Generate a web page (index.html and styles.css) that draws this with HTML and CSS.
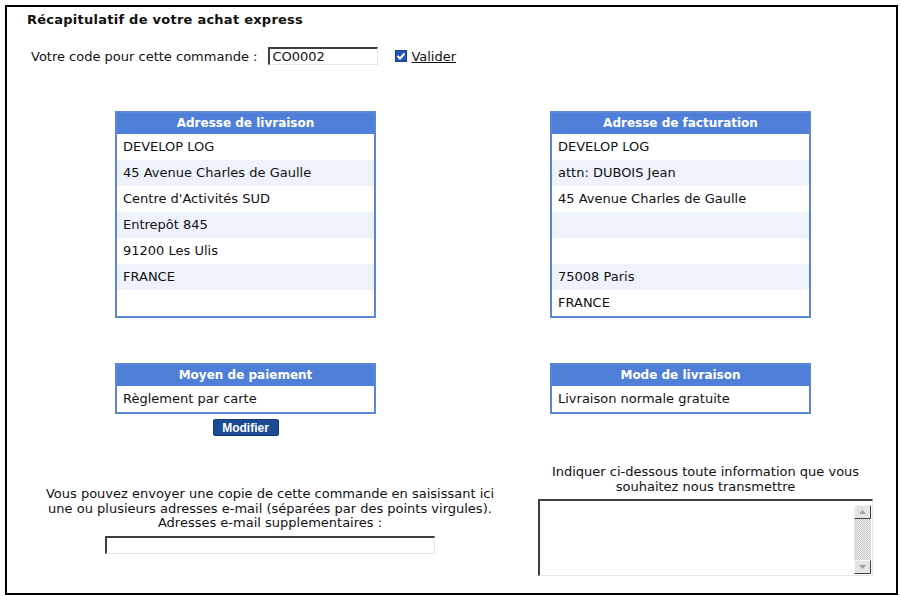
FILE: index.html
```html
<!DOCTYPE html>
<html lang="fr">
<head>
<meta charset="utf-8">
<title>Récapitulatif de votre achat express</title>
<link rel="stylesheet" href="styles.css">
</head>
<body>
<div class="page">
  <h1 class="title">Récapitulatif de votre achat express</h1>
  <div class="code-row">
    <label class="code-label" for="code">Votre code pour cette commande :</label>
    <input class="code-input" id="code" type="text" value="CO0002">
    <span class="check">
      <svg width="12" height="12" viewBox="0 0 12 12"><rect x="0.5" y="0.5" width="11" height="11" fill="#2456b8" stroke="#1c3f8a"/><path d="M2.5 6 L5 8.5 L9.5 3.5" fill="none" stroke="#fff" stroke-width="2"/></svg>
    </span>
    <a class="valider" href="#">Valider</a>
  </div>

  <div class="cards">
    <div class="card">
      <div class="card-head">Adresse de livraison</div>
      <div class="row">DEVELOP LOG</div>
      <div class="row alt">45 Avenue Charles de Gaulle</div>
      <div class="row">Centre d'Activités SUD</div>
      <div class="row alt">Entrepôt 845</div>
      <div class="row">91200 Les Ulis</div>
      <div class="row alt">FRANCE</div>
      <div class="row"></div>
    </div>
    <div class="card">
      <div class="card-head">Adresse de facturation</div>
      <div class="row">DEVELOP LOG</div>
      <div class="row alt">attn: DUBOIS Jean</div>
      <div class="row">45 Avenue Charles de Gaulle</div>
      <div class="row alt"></div>
      <div class="row"></div>
      <div class="row alt">75008 Paris</div>
      <div class="row">FRANCE</div>
    </div>
    <div class="card-wrap">
      <div class="card">
        <div class="card-head">Moyen de paiement</div>
        <div class="row">Règlement par carte</div>
      </div>
      <button class="btn" type="button">Modifier</button>
    </div>
    <div class="card-wrap">
      <div class="card">
        <div class="card-head">Mode de livraison</div>
        <div class="row">Livraison normale gratuite</div>
      </div>
    </div>
  </div>

  <div class="bottom">
    <div class="mail-block">
      <p class="note">Vous pouvez envoyer une copie de cette commande en saisissant ici<br>une ou plusieurs adresses e-mail (séparées par des points virgules).<br>Adresses e-mail supplementaires :</p>
      <input class="mail-input" type="text">
    </div>
    <div class="info-block">
      <p class="note">Indiquer ci-dessous toute information que vous<br>souhaitez nous transmettre</p>
      <div class="textbox">
        <textarea class="ta"></textarea>
        <div class="sbar">
          <div class="sbtn"><svg width="7" height="4" viewBox="0 0 7 4"><path d="M0 4 L3.5 0 L7 4 Z" fill="#a0a0a0"/></svg></div>
          <div class="strack"></div>
          <div class="sbtn"><svg width="7" height="4" viewBox="0 0 7 4"><path d="M0 0 L3.5 4 L7 0 Z" fill="#a0a0a0"/></svg></div>
        </div>
      </div>
    </div>
  </div>
</div>
</body>
</html>
```

FILE: styles.css
```css
* { box-sizing: border-box; }
html, body { margin: 0; padding: 0; background: #fff; }
body {
  font-family: "DejaVu Sans", Verdana, sans-serif;
  font-size: 13px;
  color: #111;
}
.page {
  margin: 5px 0 0 5px;
  width: 893px;
  height: 590px;
  border: 2px solid #000;
  position: relative;
}
.title {
  margin: 0;
  padding: 4px 0 0 20px;
  font-size: 13px;
  font-weight: bold;
  letter-spacing: 0.25px;
  line-height: 17px;
}
.code-row {
  display: flex;
  align-items: center;
  margin-top: 19px;
  padding-left: 24px;
  height: 18px;
}
.code-label { margin-right: 11px; }
.code-input {
  width: 110px;
  height: 18px;
  font: 13px "DejaVu Sans", Verdana, sans-serif;
  padding: 0 0 0 2px;
  border: 1px solid;
  border-color: #404040 #e6e6e6 #e6e6e6 #404040;
  border-width: 2px 1px 1px 2px;
  color: #111;
}
.check { margin-left: 17px; display: flex; }
.valider { margin-left: 4px; color: #111; }

.cards {
  display: grid;
  grid-template-columns: 261px 261px;
  column-gap: 174px;
  row-gap: 45px;
  padding-left: 108px;
  margin-top: 46px;
}
.card {
  border: 2px solid #5b86d8;
  background: #fff;
}
.card-head {
  background: #4f7fd9;
  color: #fff;
  font-size: 12px;
  font-weight: bold;
  text-align: center;
  height: 21px;
  line-height: 21px;
}
.row {
  height: 26px;
  line-height: 26px;
  padding-left: 6px;
}
.row.alt { background: #eef2fb; }
.card-wrap { display: flex; flex-direction: column; align-items: center; }
.card-wrap .card { align-self: stretch; }
.btn {
  margin-top: 5px;
  width: 66px;
  height: 17px;
  background: #1c4c94;
  color: #fff;
  border: 1px solid #133a75;
  border-radius: 2px;
  font: bold 12px "Liberation Sans", Arial, sans-serif;
  padding: 0;
  line-height: 14px;
}

.bottom {
  display: flex;
  align-items: center;
  margin-top: 29px;
}
.mail-block {
  width: 460px;
  margin-left: 33px;
  display: flex;
  flex-direction: column;
  align-items: center;
}
.note {
  margin: 0;
  text-align: center;
  line-height: 14.5px;
}
.mail-input {
  margin-top: 5px;
  width: 330px;
  height: 18px;
  border: 1px solid;
  border-color: #404040 #e6e6e6 #e6e6e6 #404040;
  border-width: 2px 1px 1px 2px;
}
.info-block {
  margin-left: 38px;
  width: 335px;
  display: flex;
  flex-direction: column;
  align-items: center;
  white-space: nowrap;
}
.textbox {
  margin-top: 5px;
  width: 335px;
  height: 77px;
  display: flex;
  border: 1px solid;
  border-color: #404040 #e6e6e6 #e6e6e6 #404040;
  border-width: 2px 1px 1px 2px;
  padding: 4px 1px 1px 0;
}
.ta {
  flex: 1;
  border: 0;
  resize: none;
  outline: none;
  font: 13px "DejaVu Sans", Verdana, sans-serif;
}
.sbar {
  width: 17px;
  display: flex;
  flex-direction: column;
}
.sbtn {
  height: 14px;
  background: #e4e4e4;
  border: 1px solid;
  border-color: #f4f4f4 #404040 #404040 #f4f4f4;
  display: flex;
  align-items: center;
  justify-content: center;
}
.strack {
  flex: 1;
  background: repeating-conic-gradient(#c4c4c4 0 25%, #f2f2f2 0 50%) 0 0 / 2px 2px;
}
```
